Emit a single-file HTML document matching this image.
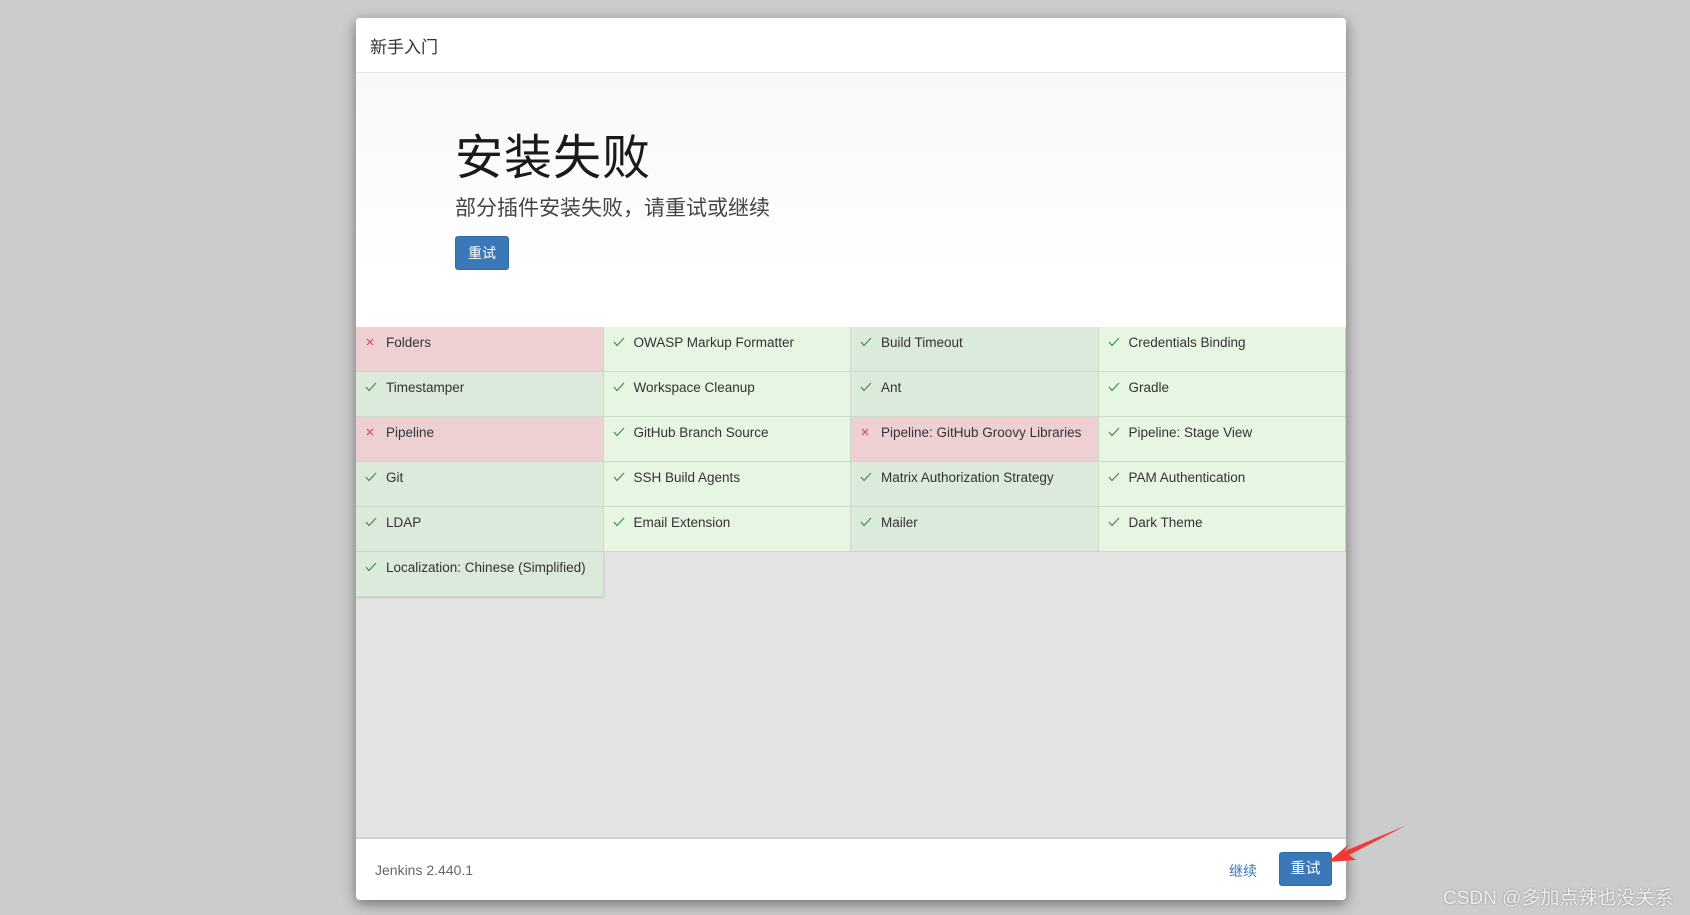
<!DOCTYPE html>
<html><head><meta charset="utf-8"><style>
*{margin:0;padding:0;box-sizing:border-box}
body{width:1690px;height:915px;background:#cccccc;position:relative;overflow:hidden;font-family:"Liberation Sans","Noto Sans CJK SC",sans-serif}
.dlg{position:absolute;left:356px;top:18px;width:990px;height:882px;background:#e4e4e4;border-radius:4px;box-shadow:0 4px 14px rgba(0,0,0,.45);overflow:hidden}
.hd{height:55px;background:#fff;border-bottom:1px solid #e5e5e5;font-size:17px;color:#333;padding:15px 14px}
.hero{position:absolute;top:55px;left:0;width:990px;height:254px;background:linear-gradient(#f8f8f8,#fff 80%)}
.hero h1{position:absolute;left:99px;top:62px;font-size:48px;line-height:1;font-weight:normal;color:#1a1a1a;letter-spacing:1px}
.hero p{position:absolute;left:99px;top:125px;font-size:21px;line-height:1;color:#444}
.btn{position:absolute;background:#3b78b8;color:#fff;border-radius:3px;font-size:14px;text-align:center;border:1px solid #2e6da4}
.grid{position:absolute;top:309px;left:0;width:990px}
.c{position:absolute;width:247.5px;height:45px;border-right:1px solid #cbd9c8;border-bottom:1px solid #cbd9c8;font-size:13.5px;color:#333;padding:8px 0 0 30px;white-space:nowrap}
.c svg{position:absolute;left:9px;top:10px}
.g1{background:#dbeada}.g2{background:#e6f6e3}.f{background:#efd0d2}
.ft{position:absolute;left:0;top:819px;width:990px;height:63px;background:#fff;border-top:2px solid #d2d2d2}
</style></head><body>
<div class="dlg">
<div class="hd">新手入门</div>
<div class="hero"><h1>安装失败</h1><p>部分插件安装失败，请重试或继续</p>
<div class="btn" style="left:99px;top:163px;width:54px;height:34px;line-height:32px">重试</div></div>
<div class="grid">
<div class="c f" style="left:0;top:0"><svg width="10" height="10"><path d="M2,2L8,8M8,2L2,8" stroke="#d34c4c" stroke-width="1.2"/></svg>Folders</div>
<div class="c g2" style="left:247.5px;top:0"><svg width="12" height="10"><path d="M1,5L4,8.5L11,1" fill="none" stroke="#3c8b3c" stroke-width="1.1"/></svg>OWASP Markup Formatter</div>
<div class="c g1" style="left:495px;top:0"><svg width="12" height="10"><path d="M1,5L4,8.5L11,1" fill="none" stroke="#3c8b3c" stroke-width="1.1"/></svg>Build Timeout</div>
<div class="c g2" style="left:742.5px;top:0"><svg width="12" height="10"><path d="M1,5L4,8.5L11,1" fill="none" stroke="#3c8b3c" stroke-width="1.1"/></svg>Credentials Binding</div>
<div class="c g1" style="left:0;top:45px"><svg width="12" height="10"><path d="M1,5L4,8.5L11,1" fill="none" stroke="#3c8b3c" stroke-width="1.1"/></svg>Timestamper</div>
<div class="c g2" style="left:247.5px;top:45px"><svg width="12" height="10"><path d="M1,5L4,8.5L11,1" fill="none" stroke="#3c8b3c" stroke-width="1.1"/></svg>Workspace Cleanup</div>
<div class="c g1" style="left:495px;top:45px"><svg width="12" height="10"><path d="M1,5L4,8.5L11,1" fill="none" stroke="#3c8b3c" stroke-width="1.1"/></svg>Ant</div>
<div class="c g2" style="left:742.5px;top:45px"><svg width="12" height="10"><path d="M1,5L4,8.5L11,1" fill="none" stroke="#3c8b3c" stroke-width="1.1"/></svg>Gradle</div>
<div class="c f" style="left:0;top:90px"><svg width="10" height="10"><path d="M2,2L8,8M8,2L2,8" stroke="#d34c4c" stroke-width="1.2"/></svg>Pipeline</div>
<div class="c g2" style="left:247.5px;top:90px"><svg width="12" height="10"><path d="M1,5L4,8.5L11,1" fill="none" stroke="#3c8b3c" stroke-width="1.1"/></svg>GitHub Branch Source</div>
<div class="c f" style="left:495px;top:90px"><svg width="10" height="10"><path d="M2,2L8,8M8,2L2,8" stroke="#d34c4c" stroke-width="1.2"/></svg>Pipeline: GitHub Groovy Libraries</div>
<div class="c g2" style="left:742.5px;top:90px"><svg width="12" height="10"><path d="M1,5L4,8.5L11,1" fill="none" stroke="#3c8b3c" stroke-width="1.1"/></svg>Pipeline: Stage View</div>
<div class="c g1" style="left:0;top:135px"><svg width="12" height="10"><path d="M1,5L4,8.5L11,1" fill="none" stroke="#3c8b3c" stroke-width="1.1"/></svg>Git</div>
<div class="c g2" style="left:247.5px;top:135px"><svg width="12" height="10"><path d="M1,5L4,8.5L11,1" fill="none" stroke="#3c8b3c" stroke-width="1.1"/></svg>SSH Build Agents</div>
<div class="c g1" style="left:495px;top:135px"><svg width="12" height="10"><path d="M1,5L4,8.5L11,1" fill="none" stroke="#3c8b3c" stroke-width="1.1"/></svg>Matrix Authorization Strategy</div>
<div class="c g2" style="left:742.5px;top:135px"><svg width="12" height="10"><path d="M1,5L4,8.5L11,1" fill="none" stroke="#3c8b3c" stroke-width="1.1"/></svg>PAM Authentication</div>
<div class="c g1" style="left:0;top:180px"><svg width="12" height="10"><path d="M1,5L4,8.5L11,1" fill="none" stroke="#3c8b3c" stroke-width="1.1"/></svg>LDAP</div>
<div class="c g2" style="left:247.5px;top:180px"><svg width="12" height="10"><path d="M1,5L4,8.5L11,1" fill="none" stroke="#3c8b3c" stroke-width="1.1"/></svg>Email Extension</div>
<div class="c g1" style="left:495px;top:180px"><svg width="12" height="10"><path d="M1,5L4,8.5L11,1" fill="none" stroke="#3c8b3c" stroke-width="1.1"/></svg>Mailer</div>
<div class="c g2" style="left:742.5px;top:180px"><svg width="12" height="10"><path d="M1,5L4,8.5L11,1" fill="none" stroke="#3c8b3c" stroke-width="1.1"/></svg>Dark Theme</div>
<div class="c g1" style="left:0;top:225px;box-shadow:0 1px 2px rgba(0,0,0,.15)"><svg width="12" height="10"><path d="M1,5L4,8.5L11,1" fill="none" stroke="#3c8b3c" stroke-width="1.1"/></svg>Localization: Chinese (Simplified)</div>
</div>
<div class="ft">
<div style="position:absolute;left:19px;top:23px;font-size:14px;color:#666">Jenkins 2.440.1</div>
<div style="position:absolute;left:873px;top:22px;font-size:14px;color:#3b78b8">继续</div>
<div class="btn" style="left:923px;top:13px;width:53px;height:34px;line-height:32px;font-size:15px">重试</div>
</div>
</div>
<svg style="position:absolute;left:0;top:0" width="1690" height="915">
<path d="M1407,825 L1345,851 L1349,844 L1328,862 L1356,860 L1349,855 Z" fill="#f03a3a"/>
</svg>
<div style="position:absolute;left:1443px;top:883px;font-size:19px;color:#eee;text-shadow:0 0 2px #888">CSDN @多加点辣也没关系</div>
</body></html>
